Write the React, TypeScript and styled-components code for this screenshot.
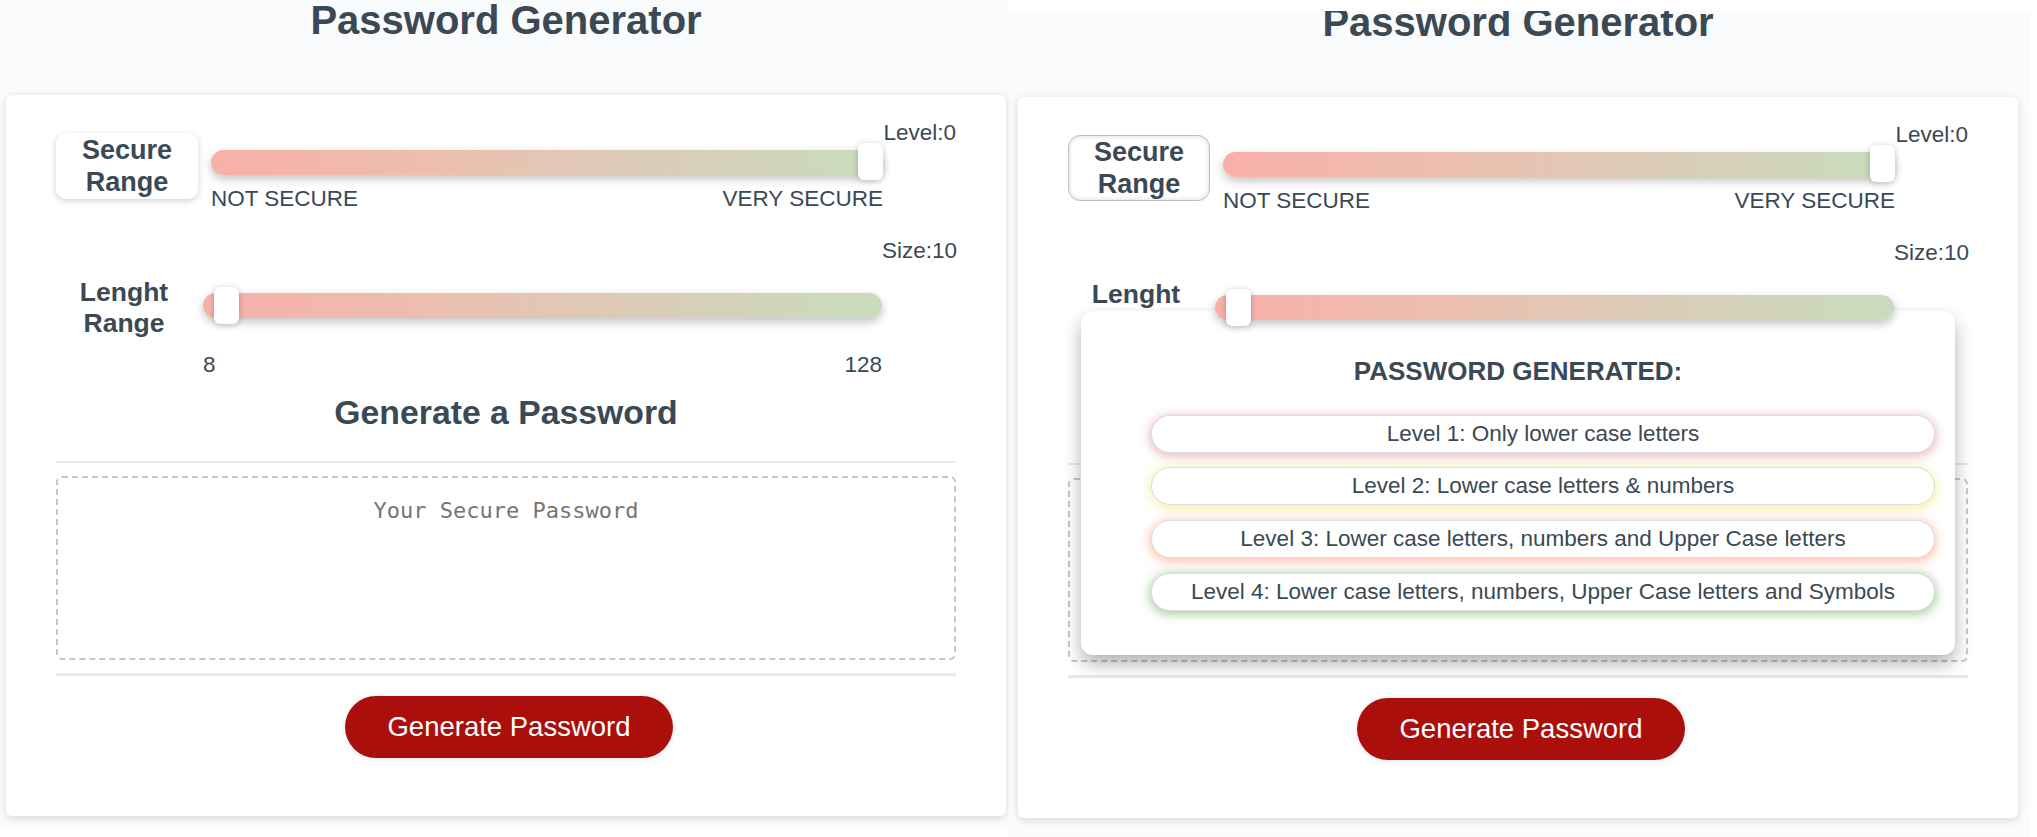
import React from "react";
import styled, { createGlobalStyle } from "styled-components";

const GlobalStyle = createGlobalStyle`
  html, body { margin: 0; padding: 0; background: #ffffff; }
  body { font-family: "Liberation Sans", Arial, sans-serif; color: #3b4954; }
  * { box-sizing: border-box; }
`;

const Stage = styled.div`
  display: flex;
  align-items: flex-start;
  width: 2037px;
  height: 837px;
  overflow: hidden;
  background: #ffffff;
`;

const Shot = styled.div<{ $w: number; $h: number; $top: number; $padL: number }>`
  flex: none;
  width: ${(p) => p.$w}px;
  height: ${(p) => p.$h}px;
  margin-top: ${(p) => p.$top}px;
  padding-left: ${(p) => p.$padL}px;
  background: #f9fbfd;
  overflow: hidden;
`;

const Column = styled.div`
  width: 1000px;
  display: flex;
  flex-direction: column;
`;

const Title = styled.h1<{ $shift: number }>`
  margin: ${(p) => p.$shift}px 0 0;
  font-size: 40px;
  line-height: 46px;
  font-weight: 700;
  text-align: center;
  color: #3b4954;
`;

const Card = styled.div`
  position: relative;
  margin-top: 52px;
  width: 1000px;
  height: 721px;
  background: #ffffff;
  border-radius: 6px;
  box-shadow: rgba(0, 0, 0, 0.15) 0px 2px 8px 0px;
  padding: 25px 50px 0;
  display: flex;
  flex-direction: column;
`;

const RangeSection = styled.div<{ $labelW: number; $gap: number; $sliderW: number; $mt: number }>`
  display: grid;
  grid-template-columns: ${(p) => p.$labelW}px ${(p) => p.$sliderW}px 1fr;
  align-items: start;
  margin-top: ${(p) => p.$mt}px;
  & > :nth-child(2) {
    margin-left: ${(p) => p.$gap}px;
  }
`;

const RangeLabel = styled.div<{ $variant: "card" | "outlined" | "plain"; $mt: number; $lh: number; $fs: number }>`
  margin-top: ${(p) => p.$mt}px;
  font-size: ${(p) => p.$fs}px;
  font-weight: 700;
  line-height: ${(p) => p.$lh}px;
  text-align: center;
  color: #3b4954;
  ${(p) =>
    p.$variant === "card"
      ? `height: 66px; padding-top: 1px; background: #fff; border-radius: 10px; box-shadow: 0 2px 7px rgba(0,0,0,0.18);`
      : p.$variant === "outlined"
      ? `height: 66px; padding-top: 0px; background: #fff; border-radius: 12px; border: 1.5px solid #bfbfbf; box-shadow: inset 0 0 5px rgba(0,0,0,0.16);`
      : ``}
`;

const SliderCol = styled.div<{ $pt: number }>`
  padding-top: ${(p) => p.$pt}px;
`;

const Track = styled.div<{ $raised?: boolean }>`
  position: relative;
  z-index: ${(p) => (p.$raised ? 2 : "auto")};
  height: 25px;
  border-radius: 12.5px;
  background: linear-gradient(90deg, #f8afaa 0%, #ecbfb0 35%, #dccbb6 62%, #c8dcbd 100%);
  box-shadow: 0 4px 10px rgba(0, 0, 0, 0.24);
`;

const Thumb = styled.div<{ $top: number }>`
  position: absolute;
  top: ${(p) => p.$top}px;
  width: 25px;
  height: 37px;
  border-radius: 6px;
  background: #ffffff;
  box-shadow: 0 1px 6px rgba(0, 0, 0, 0.22);
`;

const MinMax = styled.div<{ $mt: number }>`
  display: flex;
  justify-content: space-between;
  margin-top: ${(p) => p.$mt}px;
  font-size: 22.5px;
  line-height: 25px;
  color: #3b4954;
`;

const ValueText = styled.div`
  text-align: right;
  font-size: 22.5px;
  line-height: 25px;
  color: #3b4954;
`;

const Heading = styled.h2`
  margin: 16.3px 0 0;
  font-size: 33.75px;
  line-height: 38px;
  font-weight: 700;
  text-align: center;
  color: #3b4954;
`;

const Divider = styled.div<{ $mt: number; $h: number }>`
  margin-top: ${(p) => p.$mt}px;
  height: ${(p) => p.$h}px;
  background: #e7e9eb;
`;

const PasswordBox = styled.div`
  margin-top: 12.5px;
  height: 184px;
  border: 2px dashed #c0c7cf;
  border-radius: 6px;
  padding-top: 20px;
  text-align: center;
  font-family: "DejaVu Sans Mono", "Liberation Mono", monospace;
  font-size: 22px;
  color: #757575;
`;

const ButtonRow = styled.div`
  display: flex;
  justify-content: center;
  padding-left: 6px;
  margin-top: 20px;
`;

const GenerateButton = styled.button`
  width: 328px;
  height: 62px;
  border: none;
  border-radius: 31px;
  background: #aa0f0c;
  color: #ffffff;
  font-family: "Liberation Sans", Arial, sans-serif;
  font-size: 27.5px;
  padding: 0;
  box-shadow: 0 1px 6px rgba(0, 0, 0, 0.1);
  cursor: pointer;
`;

const Popup = styled.div`
  position: absolute;
  left: 63px;
  top: 214px;
  z-index: 1;
  width: 874px;
  height: 344px;
  background: #ffffff;
  border-radius: 12px;
  box-shadow: 0 9px 18px rgba(0, 0, 0, 0.3);
  padding: 46px 20px 0 20px;
`;

const PopupTitle = styled.div`
  font-size: 26px;
  font-weight: 700;
  line-height: 29px;
  text-align: center;
  color: #3b4954;
`;

const LevelList = styled.div`
  display: flex;
  flex-direction: column;
  gap: 14.7px;
  margin-top: 28.8px;
  padding-left: 50px;
`;

const LevelItem = styled.div<{ $glow: string }>`
  height: 38px;
  border-radius: 19px;
  border: 1px solid #dddddd;
  background: #ffffff;
  display: flex;
  align-items: center;
  justify-content: center;
  font-size: 22.5px;
  color: #3b4954;
  box-shadow: 0 2px 10px 2px ${(p) => p.$glow};
`;

const levels = [
  { text: "Level 1: Only lower case letters", glow: "rgba(220, 130, 130, 0.5)" },
  { text: "Level 2: Lower case letters & numbers", glow: "rgba(236, 232, 110, 0.55)" },
  { text: "Level 3: Lower case letters, numbers and Upper Case letters", glow: "rgba(255, 150, 110, 0.55)" },
  { text: "Level 4: Lower case letters, numbers, Upper Case letters and Symbols", glow: "rgba(100, 165, 80, 0.5)" },
];

function Page({ hovered }: { hovered: boolean }) {
  return (
    <Column>
      <Title $shift={hovered ? -12 : -3}>Password Generator</Title>
      <Card>
        <RangeSection $labelW={142} $gap={13} $sliderW={685} $mt={0}>
          <RangeLabel $variant={hovered ? "outlined" : "card"} $mt={13} $lh={32} $fs={27}>
            Secure
            <br />
            Range
          </RangeLabel>
          <SliderCol $pt={30}>
            <Track>
              <Thumb $top={-7} style={{ left: 647 }} />
            </Track>
            <MinMax $mt={10.5}>
              <span>NOT SECURE</span>
              <span>VERY SECURE</span>
            </MinMax>
          </SliderCol>
          <ValueText>Level:0</ValueText>
        </RangeSection>

        <RangeSection $labelW={136} $gap={11} $sliderW={690} $mt={27.5}>
          <RangeLabel $variant="plain" $mt={39} $lh={31} $fs={26.5}>
            Lenght
            <br />
            Range
          </RangeLabel>
          <SliderCol $pt={55}>
            <Track $raised={hovered}>
              <Thumb $top={-6} style={{ left: 11 }} />
            </Track>
            <MinMax $mt={34}>
              <span>8</span>
              <span>128</span>
            </MinMax>
          </SliderCol>
          <ValueText>Size:10</ValueText>
        </RangeSection>

        <Heading>Generate a Password</Heading>
        <Divider $mt={30} $h={2} />
        <PasswordBox>Your Secure Password</PasswordBox>
        <Divider $mt={13} $h={3} />
        <ButtonRow>
          <GenerateButton>Generate Password</GenerateButton>
        </ButtonRow>

        {hovered && (
          <Popup>
            <PopupTitle>PASSWORD GENERATED:</PopupTitle>
            <LevelList>
              {levels.map((l) => (
                <LevelItem key={l.text} $glow={l.glow}>
                  {l.text}
                </LevelItem>
              ))}
            </LevelList>
          </Popup>
        )}
      </Card>
    </Column>
  );
}

export default function App() {
  return (
    <>
      <GlobalStyle />
      <Stage>
        <Shot $w={1009} $h={828} $top={0} $padL={6}>
          <Page hovered={false} />
        </Shot>
        <Shot $w={1021} $h={826} $top={11} $padL={9}>
          <Page hovered={true} />
        </Shot>
      </Stage>
    </>
  );
}
